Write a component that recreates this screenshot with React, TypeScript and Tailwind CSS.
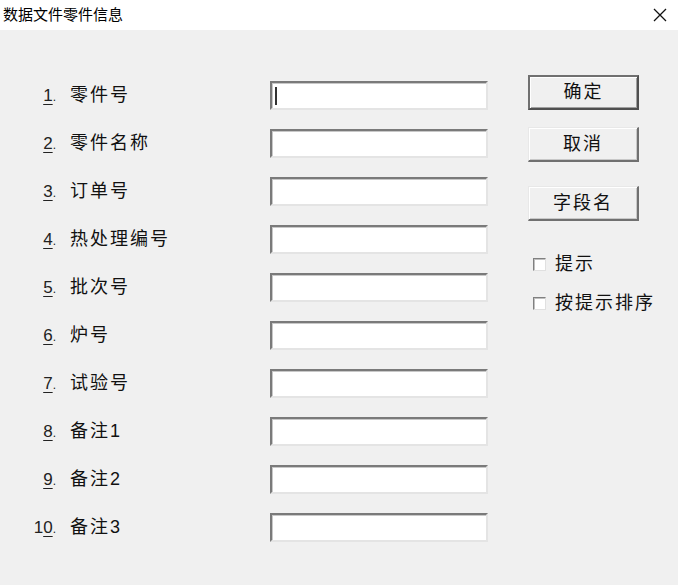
import React from "react";

const rows: { n: string; u: string; pre?: string; label: string }[] = [
  { n: "1", u: "1", label: "零件号" },
  { n: "2", u: "2", label: "零件名称" },
  { n: "3", u: "3", label: "订单号" },
  { n: "4", u: "4", label: "热处理编号" },
  { n: "5", u: "5", label: "批次号" },
  { n: "6", u: "6", label: "炉号" },
  { n: "7", u: "7", label: "试验号" },
  { n: "8", u: "8", label: "备注1" },
  { n: "9", u: "9", label: "备注2" },
  { n: "10", u: "0", pre: "1", label: "备注3" },
];

const font = {
  fontFamily: '"Liberation Sans", "Noto Sans CJK SC", sans-serif',
};

function Btn({ label, def }: { label: string; def?: boolean }) {
  return (
    <div
      className={
        "w-[111px] h-[35px] bg-[#f0f0f0] flex items-center justify-center text-[18px] text-[#111] tracking-[2px] " +
        (def
          ? "border-[2px] border-t-[#707070] border-l-[#707070] border-b-[#505050] border-r-[#505050] shadow-[inset_1px_1px_0_#ffffff,inset_-1px_-1px_0_#a0a0a0]"
          : "border-t border-l border-t-[#e8e8e8] border-l-[#e8e8e8] border-b-[2px] border-r-[2px] border-b-[#707070] border-r-[#707070] shadow-[inset_1px_1px_0_#ffffff,inset_-1px_-1px_0_#c8c8c8]")
      }
    >
      {label}
    </div>
  );
}

function Check({ label }: { label: string }) {
  return (
    <div className="flex items-center gap-[9px] text-[18px] text-[#111]">
      <div className="w-[13px] h-[13px] bg-white border-t border-l border-t-[#808080] border-l-[#808080] border-b border-r border-b-[#e0e0e0] border-r-[#e0e0e0] shadow-[inset_1px_1px_0_#c0c0c0]" />
      <span className="tracking-[2px]">{label}</span>
    </div>
  );
}

export default function App() {
  return (
    <div className="w-[678px] h-[585px] bg-[#f0f0f0] flex flex-col" style={font}>
      <div className="h-[30px] bg-white flex items-center justify-between shrink-0">
        <span className="pl-[3px] text-[15px] text-black">数据文件零件信息</span>
        <svg width="14" height="14" viewBox="0 0 14 14" className="mr-[11px]">
          <path d="M1 1 L13 13 M13 1 L1 13" stroke="#111" strokeWidth="1.3" />
        </svg>
      </div>
      <div className="flex">
        <div className="flex flex-col gap-[19px] pt-[51px]">
          {rows.map((r) => (
            <div key={r.n} className="flex items-center h-[29px]">
              <div className="w-[58px] text-right text-[17px] text-[#222] pr-[2px]">
                {r.pre}
                <span className="underline underline-offset-[3px]">{r.u}</span>
                <span className="text-[12px]">.</span>
              </div>
              <div className="w-[212px] pl-[12px] text-[18px] text-[#111] tracking-[2px]">
                {r.label}
              </div>
              <div className="w-[218px] h-[29px] bg-white border-t-[2px] border-l-[2px] border-t-[#7a7a7a] border-l-[#7a7a7a] border-b-[2px] border-r-[2px] border-b-[#e4e4e4] border-r-[#e4e4e4] shadow-[inset_1px_1px_0_#c8c8c8] flex items-center">
                {r.n === "1" && <div className="ml-[3px] w-[2px] h-[18px] bg-[#333]" />}
              </div>
            </div>
          ))}
        </div>
        <div className="flex flex-col pl-[40px] pt-[45px]">
          <Btn label="确定" def />
          <div className="mt-[17px]">
            <Btn label="取消" />
          </div>
          <div className="mt-[24px]">
            <Btn label="字段名" />
          </div>
          <div className="mt-[30px] pl-[5px] flex flex-col gap-[12px]">
            <Check label="提示" />
            <Check label="按提示排序" />
          </div>
        </div>
      </div>
    </div>
  );
}
